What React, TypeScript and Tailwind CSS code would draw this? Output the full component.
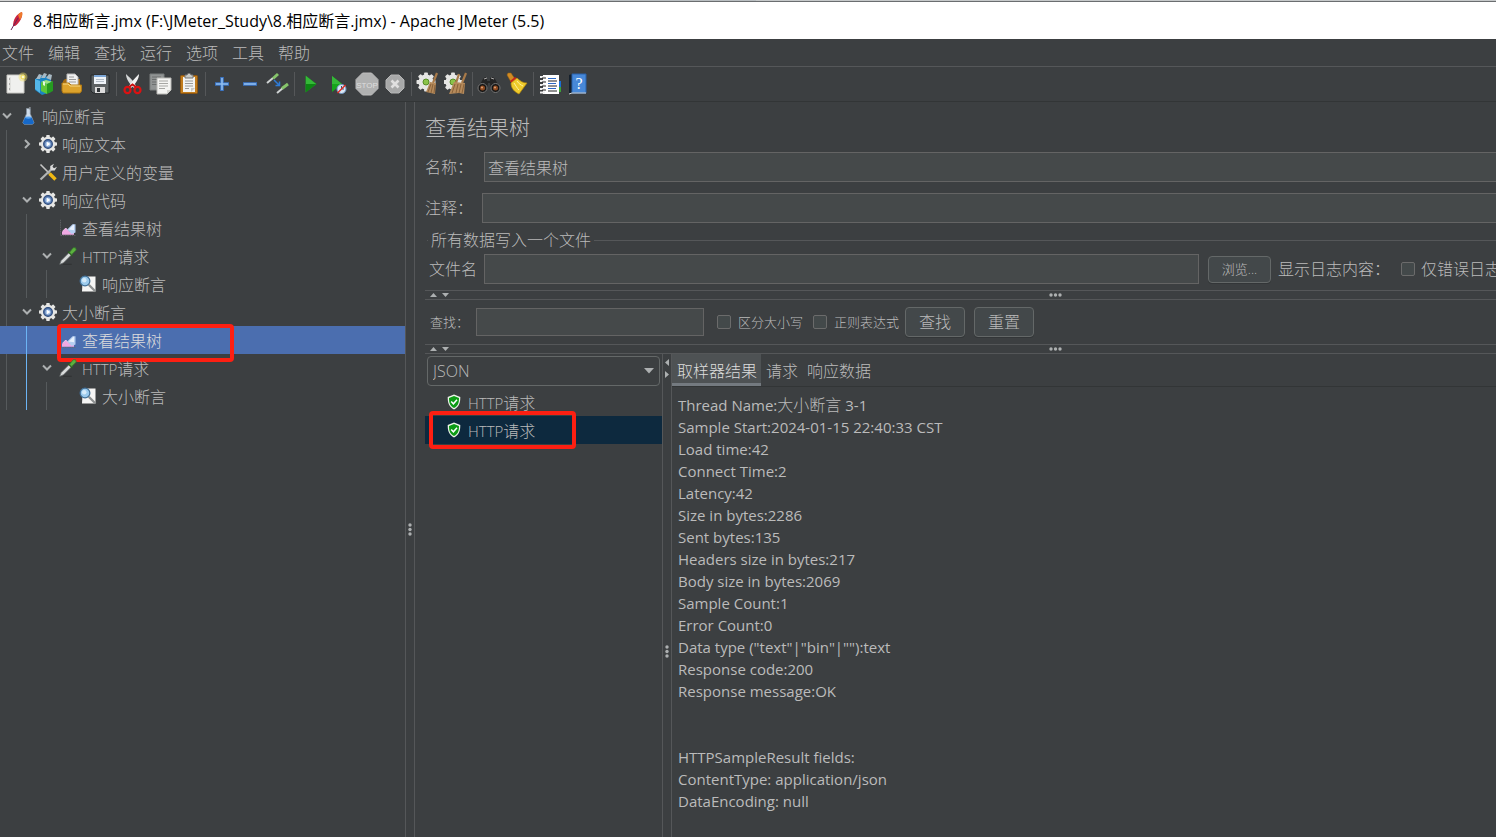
import React from 'react';

type IconProps = { children: React.ReactNode; size?: string };

const Svg = ({ children, size = 'size-6' }: IconProps) => (
  <svg viewBox="0 0 24 24" className={`${size} shrink-0`} fill="none" aria-hidden="true">
    {children}
  </svg>
);

const Teeth = ({ cx, cy, r }: { cx: number; cy: number; r: number }) => (
  <>
    {[0, 45, 90, 135, 180, 225, 270, 315].map((angle) => (
      <rect
        key={angle}
        x={cx - r * 0.2}
        y={cy - r}
        width={r * 0.4}
        height={r * 0.5}
        rx={r * 0.08}
        fill="#e6e6e4"
        transform={`rotate(${angle} ${cx} ${cy})`}
      />
    ))}
    <circle cx={cx} cy={cy} r={r * 0.8} fill="#e6e6e4" />
  </>
);

/* Toolbar icons */
const NewIcon = () => (
  <Svg>
    <path d="M3 3h17v18H3z" fill="#f0f0ee" stroke="#c9c9c5" />
    <path d="M6 5v14" stroke="#d2d2ce" />
    <path d="M5 7h1M5 12h1M5 17h1" stroke="#777" />
    <circle cx="19" cy="5" r="4.5" fill="#f5e36a" opacity=".45" />
    <circle cx="19" cy="5" r="2" fill="#fffbd0" stroke="#ead74b" />
  </Svg>
);
const TemplatesIcon = () => (
  <Svg>
    <path d="M3 7l8-4 8 3v14l-9 3-7-5z" fill="#1b84c4" />
    <path d="M4 7l3-5 3 1-2 4zM9 6l3-5 3 1-2 4zM14 6l3-4 3 1-1 5z" fill="#a9bac4" />
    <path d="M3 7l5 2v12l-5-4z" fill="#54b6e8" />
    <path d="M9 10l5-2 7 2-6 2z" fill="#9be27d" />
    <path d="M9 10l6 2v10l-6-3z" fill="#5ec738" />
    <path d="M15 12l6-3v10l-6 3z" fill="#259b20" />
    <path d="M11 9v4l2 1v-4" fill="#e5f7dd" />
  </Svg>
);
const OpenIcon = () => (
  <Svg>
    <path d="M3 9l2-2h15v10H3z" fill="#a66b10" />
    <path d="M7 2h8l3 3v10H7z" fill="#f1f1f1" stroke="#bbb" />
    <path d="M9 5h5M9 7.500h7M9 10h7" stroke="#999" />
    <path d="M2 11h7l2 2h10.500v6l-1.500 2H3l-1-2z" fill="#dda32c" stroke="#b37a13" />
    <path d="M3 12h5l2 2h10" stroke="#f7d784" />
  </Svg>
);
const SaveIcon = () => (
  <Svg>
    <path d="M3 3h18v18H5l-2-2z" fill="#5d6264" stroke="#25282a" />
    <path d="M6 3h12v9H6z" fill="#eef3f8" />
    <path d="M6 3h12v2H6z" fill="#7ca6d6" />
    <path d="M8 7.500h8M8 9.500h8" stroke="#b3bdc7" />
    <path d="M7 15h10v6H7z" fill="#dcdcdc" />
    <path d="M9 16h3v4H9z" fill="#33383b" />
  </Svg>
);
const CutIcon = () => (
  <Svg>
    <path d="M5 2c0 5 3 9 8 14l2-2C13 9 8 5 5 2z" fill="#d7d9da" />
    <path d="M18 2c0 5-3 9-8 14l-2-2c3-5 7-9 10-12z" fill="#f2f2f2" />
    <ellipse cx="6.500" cy="18" rx="3" ry="3.200" stroke="#dc1212" strokeWidth="2.200" />
    <ellipse cx="16.500" cy="18" rx="3" ry="3.200" stroke="#dc1212" strokeWidth="2.200" />
    <path d="M8 15l3.500-2.500 3.500 2.500" stroke="#c80f0f" strokeWidth="2" />
  </Svg>
);
const CopyIcon = () => (
  <Svg>
    <path d="M1 2h14v16H1z" fill="#919494" stroke="#7b7e7e" />
    <path d="M3 5h9M3 7.500h9M3 10h5M3 12.500h5" stroke="#6c6f6f" />
    <path d="M8 6h14v12l-4 4H8z" fill="#f4f4f2" stroke="#b8b8b5" />
    <path d="M10 9h9M10 11.500h9M10 14h9M10 16.500h6" stroke="#a6a6a3" />
    <path d="M18 22v-4h4z" fill="#d2d2ce" />
  </Svg>
);
const PasteIcon = () => (
  <Svg>
    <rect x="3.500" y="3.500" width="17" height="18" rx="1" fill="#c17c1c" stroke="#8b5410" />
    <path d="M6 5h12v15H6z" fill="#f3f3f1" />
    <path d="M8 9h8M8 11.500h8M8 14h8M8 16.500h4" stroke="#9a9a97" />
    <path d="M14 20v-4h4z" fill="#c9c9c5" />
    <path d="M8 3h2l1-1.500h2L14 3h2v3H8z" fill="#c8cac6" stroke="#777" />
  </Svg>
);
const PlusIcon = () => (
  <Svg>
    <path d="M12 5v14M5 12h14" stroke="#3a74c4" strokeWidth="3.600" />
    <path d="M12 6v12M6 12h12" stroke="#8fbdf0" strokeWidth="1.600" />
  </Svg>
);
const MinusIcon = () => (
  <Svg>
    <path d="M5 12h14" stroke="#3a74c4" strokeWidth="3.600" />
    <path d="M6 12h12" stroke="#8fbdf0" strokeWidth="1.600" />
  </Svg>
);
const ToggleIcon = () => (
  <Svg>
    <path d="M1 11l6-5" stroke="#cfd3d3" strokeWidth="2" />
    <path d="M7 6.500L12 2" stroke="#86c46b" strokeWidth="3" />
    <path d="M11 21l6-5" stroke="#cfd3d3" strokeWidth="2" />
    <path d="M16 16.500L22 12" stroke="#86c46b" strokeWidth="3" />
    <path d="M8 8l5 5M13.500 9.500V13.500H9.500" stroke="#2e7bd6" strokeWidth="1.500" />
  </Svg>
);
const RunIcon = () => (
  <Svg>
    <path d="M6.500 3.500v17l11-8.500z" fill="#17a51c" />
    <path d="M7 4v8h10z" fill="#35b838" />
    <path d="M7 20v-8h10z" fill="#0d8513" />
  </Svg>
);
const RunNoTimersIcon = () => (
  <Svg>
    <path d="M5 4v16l10-8z" fill="#17a51c" />
    <path d="M5 4v8h10z" fill="#35b838" />
    <circle cx="14.500" cy="17" r="4.500" fill="#d9e7f5" stroke="#7196c4" />
    <path d="M14.500 14v3H17" stroke="#35567c" />
    <path d="M10.500 21l8-8" stroke="#e02b20" strokeWidth="1.500" />
  </Svg>
);
const StopIcon = () => (
  <Svg>
    <path d="M7.500 1h9L23 7.500v9L16.500 23h-9L1 16.500v-9z" fill="#b0b1b1" stroke="#bdbdbd" />
    <text x="12" y="15.500" textAnchor="middle" fontSize="8" fontFamily="Liberation Sans Narrow, Liberation Sans" fontWeight="400" fill="#dedede">STOP</text>
  </Svg>
);
const ShutdownIcon = () => (
  <Svg>
    <path d="M8 3h8l5 5v8l-5 5H8l-5-5V8z" fill="#a8a9a9" stroke="#b5b6b6" />
    <path d="M8.500 8.500l7 7M15.500 8.500l-7 7" stroke="#e0e0e0" strokeWidth="2.600" />
  </Svg>
);
const ClearIcon = () => (
  <Svg>
    <Teeth cx={10} cy={10} r={9.500} />
    <circle cx="10" cy="10" r="3" fill="#8bc34a" stroke="#588c27" />
    <path d="M21 1l-4 10" stroke="#a87a49" strokeWidth="2.200" />
    <path d="M14 10l6 1-1 11-9-2z" fill="#b58a5b" />
    <path d="M15 12l-3 8M17 12l-2 9M19 13l-1 8" stroke="#7e5831" strokeWidth=".8" />
  </Svg>
);
const ClearAllIcon = () => (
  <Svg>
    <Teeth cx={9} cy={10} r={9.500} />
    <circle cx="9" cy="10" r="3" fill="#8bc34a" stroke="#588c27" />
    <path d="M15 2l-3 9M22 1l-4 10" stroke="#a87a49" strokeWidth="2.200" />
    <path d="M10 10l11 1-1 11-5-1-10 1z" fill="#b58a5b" />
    <path d="M11 12l-3 9M14 12l-2 9M17 12l-2 9M20 12l-2 9" stroke="#7e5831" strokeWidth=".8" />
  </Svg>
);
const SearchIcon = () => (
  <Svg>
    <path d="M8 5l-2 2-5 9 9 2 1-7h2l1 7 9-2-5-9-2-2-3 1v3h-3V6z" fill="#242424" />
    <path d="M7 7l3-1M14 6l3 1" stroke="#aaa" />
    <circle cx="5.500" cy="16" r="4.500" fill="#151515" stroke="#777" />
    <circle cx="18.500" cy="16" r="4.500" fill="#151515" stroke="#777" />
    <circle cx="5.500" cy="16" r="2.500" fill="#8d491f" />
    <circle cx="18.500" cy="16" r="2.500" fill="#8d491f" />
    <circle cx="5" cy="15.500" r="1" fill="#e0a276" />
    <circle cx="18" cy="15.500" r="1" fill="#e0a276" />
  </Svg>
);
const BroomIcon = () => (
  <Svg>
    <path d="M3 1l3 0 4 6-4 3-4-7z" fill="#d18b24" stroke="#99600f" strokeWidth=".5" />
    <path d="M5 9l5-4 3 2-6 5z" fill="#c8231c" />
    <path d="M6 11l6-5c3 3 6 5 10 5l-8 11C10 20 6 17 6 11z" fill="#efcb2c" stroke="#b98b0b" strokeWidth=".7" />
    <path d="M9 11c2 3 3 5 5 7M12 9c2 3 4 4 6 5" stroke="#fff3a0" />
  </Svg>
);
const FunctionHelperIcon = () => (
  <Svg>
    <path d="M20 9h3v6h-3z" fill="#1b6ed2" />
    <path d="M20 15h3v5h-3z" fill="#3ca338" />
    <path d="M5 3h16v19H5z" fill="#fff" />
    <path d="M2 5h5M2 9h5M2 13h5M2 17h5M2 20.500h5" stroke="#efefef" strokeWidth="2" />
    <path d="M4 6h4M4 10h4M4 14h4M4 18h4" stroke="#222" />
    <path d="M10 6.500h8M10 11.500h8M10 16.500h8" stroke="#2d69c4" />
    <path d="M10 9h9M10 14h9M10 19h9" stroke="#222" />
  </Svg>
);
const HelpIcon = () => (
  <Svg>
    <path d="M3 3l3-1v19l-3 1z" fill="#15202c" />
    <path d="M6 2h14v19H6z" fill="#4788d8" stroke="#2b62ab" />
    <path d="M3 22l3-1h14" stroke="#d5d8da" />
    <text x="13" y="17" textAnchor="middle" fontSize="16" fontFamily="Liberation Serif" fill="#fff">?</text>
  </Svg>
);

/* Tree icons */
const FlaskIcon = () => (
  <Svg size="size-[18px]">
    <path d="M10 2h5v7l5 12-2 2H7l-2-2 5-12z" fill="#cfdcea" stroke="#8593a1" />
    <path d="M8 14h9l3 7-2 2H7l-2-2z" fill="#1669c9" />
    <ellipse cx="12.500" cy="14" rx="4.500" ry="1.500" fill="#59a2ee" />
    <path d="M15 0l-2 3" stroke="#8b9196" strokeWidth="2" />
  </Svg>
);
const GearIcon = () => (
  <Svg size="size-[18px]">
    <Teeth cx={12} cy={12} r={12} />
    <circle cx="12" cy="12" r="5.800" fill="#5a7db2" stroke="#2c4a7c" strokeWidth="1.600" />
    <circle cx="12" cy="12" r="3.500" fill="#a9c5e8" />
    <path d="M10.500 9v6l4.500-3z" fill="#fff" />
  </Svg>
);
const ToolsIcon = () => (
  <Svg size="size-[18px]">
    <path d="M2 2l12 12" stroke="#c6c6c6" strokeWidth="2.200" />
    <path d="M2 22L17 8" stroke="#b2b4b4" strokeWidth="3" />
    <path d="M14 14l8 8" stroke="#f0b913" strokeWidth="4.400" />
    <path d="M20 1l-5 3v4l2 2h4l3-5-4 2-2-2z" fill="#dcdcdc" />
  </Svg>
);
const ResultsIcon = () => (
  <Svg size="size-[18px]">
    <path d="M2 1v21h20" stroke="#666a6c" strokeDasharray="2 1" />
    <path d="M4 21v-4l5-5 5 5 6 1v3z" fill="#efa9e3" />
    <path d="M5 16l4-4 4 4 6 1" stroke="#f9d8f5" />
    <path d="M11 14l7-7h4v11l-5 2z" fill="#b5cef1" />
    <path d="M13 14l7-7v8z" fill="#e8f1fd" />
  </Svg>
);
const DropperIcon = () => (
  <Svg size="size-[18px]">
    <path d="M1 23l2-5L14 7l3 3L6 21z" fill="#d8dbdb" stroke="#767a7b" />
    <path d="M12 6l6 6" stroke="#2d5d20" strokeWidth="2" />
    <path d="M14 7l5-6h3l1 3-6 6z" fill="#5cb13f" stroke="#34792a" />
    <path d="M5 23h12" stroke="#2b2d2e" />
  </Svg>
);
const AssertIcon = () => (
  <Svg size="size-[18px]">
    <path d="M5 2h17v20H4z" fill="#f5f5f4" />
    <circle cx="8" cy="8" r="6.500" fill="#9ccbed" stroke="#3f6e96" strokeWidth="1.600" />
    <circle cx="7" cy="7" r="3" fill="#d5ebfa" />
    <path d="M13 13l9 9" stroke="#8d9091" strokeWidth="3" />
  </Svg>
);
const ShieldIcon = () => (
  <svg viewBox="0 0 14 16" className="h-4 w-3.5 shrink-0" aria-hidden="true">
    <path d="M7 .500l6.300 2.500c0 6-1.300 10-6.300 12.500C2 13 .700 9 .700 3z" fill="#eef5ea" />
    <path d="M7 2l5 2c0 5-1 8-5 10-4-2-5-5-5-10z" fill="#0c9b14" />
    <path d="M4.200 7.500l2.200 2.300 3.600-4" fill="none" stroke="#fff" strokeWidth="1.500" />
  </svg>
);
const FeatherIcon = () => (
  <svg viewBox="0 0 16 20" className="h-5 w-4 shrink-0" aria-hidden="true">
    <path d="M4 15C4 9 7 3 13 1c1 4-2 11-7 14z" fill="#c9233f" />
    <path d="M9 4c1-2 3-3 4-3 1 2 0 5-2 8z" fill="#ee7a2c" />
    <path d="M2 19L9 7" stroke="#6a2259" />
  </svg>
);

const toolbar: [string, () => React.ReactElement][][] = [
  [['新建', NewIcon], ['模板', TemplatesIcon], ['打开', OpenIcon], ['保存', SaveIcon]],
  [['剪切', CutIcon], ['复制', CopyIcon], ['粘贴', PasteIcon]],
  [['展开', PlusIcon], ['收起', MinusIcon], ['切换', ToggleIcon]],
  [['启动', RunIcon], ['不停顿启动', RunNoTimersIcon], ['停止', StopIcon], ['关闭', ShutdownIcon]],
  [['清除', ClearIcon], ['清除全部', ClearAllIcon]],
  [['搜索', SearchIcon], ['重置搜索', BroomIcon]],
  [['函数助手', FunctionHelperIcon], ['帮助', HelpIcon]],
];

type Node = {
  label: string;
  latin?: string;
  icon: () => React.ReactElement;
  level: number;
  arrow?: 'open' | 'closed';
  selected?: boolean;
  active?: boolean;
};

const tree: Node[] = [
  { label: '响应断言', icon: FlaskIcon, level: 0, arrow: 'open' },
  { label: '响应文本', icon: GearIcon, level: 1, arrow: 'closed' },
  { label: '用户定义的变量', icon: ToolsIcon, level: 1 },
  { label: '响应代码', icon: GearIcon, level: 1, arrow: 'open' },
  { label: '查看结果树', icon: ResultsIcon, level: 2 },
  { latin: 'HTTP', label: '请求', icon: DropperIcon, level: 2, arrow: 'open' },
  { label: '响应断言', icon: AssertIcon, level: 3 },
  { label: '大小断言', icon: GearIcon, level: 1, arrow: 'open' },
  { label: '查看结果树', icon: ResultsIcon, level: 2, selected: true, active: true },
  { latin: 'HTTP', label: '请求', icon: DropperIcon, level: 2, arrow: 'open', active: true },
  { label: '大小断言', icon: AssertIcon, level: 3, active: true },
];

const result = [
  'Sample Start:2024-01-15 22:40:33 CST',
  'Load time:42',
  'Connect Time:2',
  'Latency:42',
  'Size in bytes:2286',
  'Sent bytes:135',
  'Headers size in bytes:217',
  'Body size in bytes:2069',
  'Sample Count:1',
  'Error Count:0',
  'Data type ("text"|"bin"|""):text',
  'Response code:200',
  'Response message:OK',
  '',
  '',
  'HTTPSampleResult fields:',
  'ContentType: application/json',
  'DataEncoding: null',
];

const guideColor = (node: Node, index: number) => {
  if (node.active && index === 1) return 'border-[#6cb4f5]';
  if (node.selected) return 'border-transparent';
  return 'border-[#565a5c]';
};

const TreeRow = ({ node }: { node: Node }) => {
  const Icon = node.icon;
  return (
    <li className="relative">
      <button className={`flex h-7 w-full items-center text-left ${node.selected ? 'bg-[#4b6eaf] text-[#dddddd]' : ''}`}>
        {Array.from({ length: node.level }, (_, i) => (
          <span key={i} className="h-full w-5 shrink-0 pl-1.5">
            <span className={`block h-full border-l ${guideColor(node, i)}`} />
          </span>
        ))}
        <span className="flex w-[19px] shrink-0 pl-0.5">
          {node.arrow && (
            <svg viewBox="0 0 10 10" className="size-2.5" fill="none" stroke="#adb0b1" strokeWidth="2" aria-hidden="true">
              <path d={node.arrow === 'open' ? 'M1 2.500l4 4 4-4' : 'M3 1l4 4-4 4'} />
            </svg>
          )}
        </span>
        <Icon />
        <span className="pt-0.5 pl-[5px] whitespace-nowrap">
          {node.latin && <span className="text-[15px]">{node.latin}</span>}
          {node.label}
        </span>
      </button>
      {node.selected && (
        <span className="pointer-events-none absolute -top-0.5 left-[57px] h-[38px] w-[177px] rounded-sm border-4 border-[#fd1f12]" />
      )}
    </li>
  );
};

const HorizontalSplitter = () => (
  <div className="h-2.5 border-y border-[#555759]">
    <div className="flex h-full w-[59%] items-center justify-between pl-[5px]">
      <svg viewBox="0 0 20 6" className="h-1.5 w-5" fill="#adb0b1" aria-hidden="true">
        <path d="M0 5l3.500-4L7 5zM12 1h7l-3.500 4z" />
      </svg>
      <svg viewBox="0 0 13 4" className="h-1 w-[13px]" fill="#adb0b1" aria-hidden="true">
        <circle cx="2" cy="2" r="1.700" />
        <circle cx="6.500" cy="2" r="1.700" />
        <circle cx="11" cy="2" r="1.700" />
      </svg>
    </div>
  </div>
);

const VerticalDots = () => (
  <svg viewBox="0 0 4 13" className="h-[13px] w-1" fill="#adb0b1" aria-hidden="true">
    <circle cx="2" cy="2" r="1.700" />
    <circle cx="2" cy="6.500" r="1.700" />
    <circle cx="2" cy="11" r="1.700" />
  </svg>
);

const field = 'border border-[#646464] bg-[#45494a] px-[3px] outline-none';
const button = 'shrink-0 rounded-sm border border-[#646868] bg-[#43484a] shadow-[0_1px_0_#333638]';
const checkbox = 'size-3.5 shrink-0 appearance-none rounded-xs border border-[#6b6b6b] bg-[#43494a]';

export default function App() {
  return (
    <div className="flex h-screen flex-col overflow-hidden bg-[#3c3f41] font-['Open_Sans','Noto_Sans_CJK_SC',sans-serif] text-[16px] leading-[22px] font-light text-[#bbbbbb]">
      {/* Sliver of the window behind */}
      <div className="flex h-0.5 shrink-0 border-b border-[#6b6e70] bg-[#b9bec1]">
        <span className="w-[110px] bg-[#d5d5d5]" />
        <span className="ml-auto w-[740px] bg-[#c6c9ca]" />
      </div>

      {/* Title bar */}
      <header className="flex h-[37px] shrink-0 items-center gap-2 bg-white pl-[9px] font-normal text-black">
        <FeatherIcon />
        <h1 className="whitespace-nowrap">8.相应断言.jmx (F:\JMeter_Study\8.相应断言.jmx) - Apache JMeter (5.5)</h1>
      </header>

      {/* Menu */}
      <nav className="flex h-7 shrink-0 items-center gap-3.5 border-b border-[#555759] pl-0.5">
        {['文件', '编辑', '查找', '运行', '选项', '工具', '帮助'].map((item) => (
          <button key={item}>{item}</button>
        ))}
      </nav>

      {/* Toolbar */}
      <div className="flex h-[35px] shrink-0 items-center border-b border-[#323536] pl-0.5">
        {toolbar.map((group, i) => (
          <React.Fragment key={i}>
            {i > 0 && <span className="mx-0.5 h-6 w-px bg-[#555759]" />}
            {group.map(([name, Icon]) => (
              <button key={name} title={name} className="flex w-7 justify-center">
                <Icon />
              </button>
            ))}
          </React.Fragment>
        ))}
      </div>

      <div className="flex min-h-0 flex-1">
        {/* Test plan tree */}
        <aside className="w-[405px] shrink-0">
          <ul>
            {tree.map((node, i) => (
              <TreeRow key={i} node={node} />
            ))}
          </ul>
        </aside>

        <div className="w-2.5 shrink-0 border-x border-[#555759]">
          <div className="flex h-[59%] items-end justify-center">
            <VerticalDots />
          </div>
        </div>

        <main className="min-w-0 flex-1 overflow-hidden pl-2.5">
          {/* Fields run past the right edge of the window */}
          <div className="-mr-2 flex h-full flex-col">
            <h2 className="flex h-[50px] shrink-0 items-center text-[21px]">查看结果树</h2>

            <div className="flex items-center">
              <label htmlFor="name" className="w-[59px] shrink-0">名称：</label>
              <input id="name" defaultValue="查看结果树" className={`h-[30px] min-w-0 flex-1 ${field}`} />
            </div>
            <div className="mt-[11px] flex items-center">
              <label htmlFor="comment" className="w-[57px] shrink-0">注释：</label>
              <input id="comment" className={`h-[30px] min-w-0 flex-1 ${field}`} />
            </div>

            <section className="mt-[6px]">
              <h3 className="flex items-center gap-[3px] pl-0.5">
                <span className="w-px border-t border-[#555759]" />
                所有数据写入一个文件
                <span className="flex-1 border-t border-[#555759]" />
              </h3>
              <div className="mt-[3px] flex items-center pr-[3px] pl-1 whitespace-nowrap">
                <label htmlFor="file" className="w-[55px] shrink-0">文件名</label>
                <input id="file" className={`h-[30px] min-w-0 flex-1 ${field}`} />
                <button className={`mr-[7px] ml-[9px] h-[27px] w-[63px] text-[13px] ${button}`}>浏览...</button>
                <span className="w-[123px] shrink-0">显示日志内容：</span>
                <label className="flex shrink-0 items-center gap-1.5">
                  <input type="checkbox" className={checkbox} />
                  仅错误日志
                </label>
              </div>
            </section>

            <div className="mt-1.5 shrink-0">
              <HorizontalSplitter />
            </div>

            <div className="flex h-11 shrink-0 items-center pl-[5px] text-[13px] whitespace-nowrap">
              <label htmlFor="search" className="w-[46px]">查找：</label>
              <input id="search" className={`h-7 w-[228px] ${field}`} />
              <label className="ml-[13px] flex items-center gap-[7px]">
                <input type="checkbox" className={checkbox} />
                区分大小写
              </label>
              <label className="ml-[10px] flex items-center gap-[7px]">
                <input type="checkbox" className={checkbox} />
                正则表达式
              </label>
              <button className={`ml-[6px] h-[30px] w-[60px] text-[16px] ${button}`}>查找</button>
              <button className={`ml-[9px] h-[30px] w-[60px] text-[16px] ${button}`}>重置</button>
            </div>

            <div className="shrink-0">
              <HorizontalSplitter />
            </div>

            <div className="flex min-h-0 flex-1">
              {/* Sampler list */}
              <div className="w-[237px] shrink-0 pt-0.5">
                <div className="relative mx-0.5">
                  <select aria-label="JSON" className="block h-[30px] w-full appearance-none rounded-sm border border-[#646868] bg-[#3c3f41] px-[5px] outline-none">
                    <option>JSON</option>
                  </select>
                  <svg viewBox="0 0 10 6" className="pointer-events-none absolute top-3 right-1.5 h-1.5 w-2.5" fill="#adb0b1" aria-hidden="true">
                    <path d="M0 0h10L5 5.500z" />
                  </svg>
                </div>
                <ul className="mt-0.5">
                  {[false, true].map((selected, i) => (
                    <li key={i} className="relative">
                      <button className={`flex h-7 w-full items-center gap-[7px] pl-[22px] ${selected ? 'bg-[#0d293e]' : ''}`}>
                        <ShieldIcon />
                        <span className="pt-0.5"><span className="text-[15px]">HTTP</span>请求</span>
                      </button>
                      {selected && (
                        <span className="pointer-events-none absolute -top-[5px] left-1 h-[38px] w-[147px] rounded-sm border-4 border-[#fd1f12]" />
                      )}
                    </li>
                  ))}
                </ul>
              </div>

              <div className="relative w-2.5 shrink-0 border-x border-[#555759]">
                <svg viewBox="0 0 6 20" className="absolute top-[5px] left-px h-5 w-1.5" fill="#adb0b1" aria-hidden="true">
                  <path d="M5 0v7L1 3.500zM1 12v7l4-3.500z" />
                </svg>
                <div className="flex h-[63%] items-end justify-center">
                  <VerticalDots />
                </div>
              </div>

              {/* Sample details */}
              <div className="min-w-0 flex-1">
                <div role="tablist" className="flex h-[33px] border-b border-[#323536]">
                  <button role="tab" aria-selected="true" className="border-b-3 border-[#747a80] bg-[#4e5254] pt-1 pr-1 pl-[5px] text-[#dddddd]">取样器结果</button>
                  <button role="tab" className="pt-0.5 pr-1 pl-[5px]">请求</button>
                  <button role="tab" className="pt-0.5 pr-1 pl-[5px]">响应数据</button>
                </div>
                <div className="pt-[7px] pl-1.5 text-[15px] font-normal">
                  <p>
                    Thread Name:<span className="text-[16px] font-light">大小断言</span> 3-1
                  </p>
                  {result.map((line, i) => (
                    <p key={i} className="min-h-[22px]">{line}</p>
                  ))}
                </div>
              </div>
            </div>
          </div>
        </main>
      </div>
    </div>
  );
}
